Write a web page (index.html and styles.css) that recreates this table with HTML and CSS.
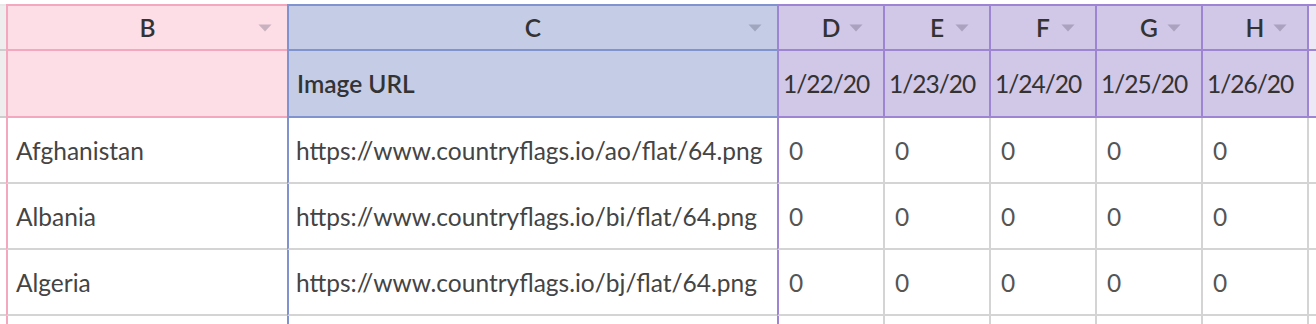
FILE: index.html
```html
<!DOCTYPE html>
<html>
<head>
<meta charset="utf-8">
<link rel="stylesheet" href="styles.css">
</head>
<body>
<div class="sheet">
  <div class="row head1">
    <div class="cell strip"></div>
    <div class="cell col-b"><span class="label">B</span><svg class="caret" viewBox="0 0 14 8"><path d="M0.5 0.5h13l-6.5 7z"/></svg></div>
    <div class="cell col-c"><span class="label">C</span><svg class="caret" viewBox="0 0 14 8"><path d="M0.5 0.5h13l-6.5 7z"/></svg></div>
    <div class="cell col-d narrow"><span class="label">D</span><svg class="caret" viewBox="0 0 14 8"><path d="M0.5 0.5h13l-6.5 7z"/></svg></div>
    <div class="cell col-d narrow"><span class="label">E</span><svg class="caret" viewBox="0 0 14 8"><path d="M0.5 0.5h13l-6.5 7z"/></svg></div>
    <div class="cell col-d narrow"><span class="label">F</span><svg class="caret" viewBox="0 0 14 8"><path d="M0.5 0.5h13l-6.5 7z"/></svg></div>
    <div class="cell col-d narrow"><span class="label">G</span><svg class="caret" viewBox="0 0 14 8"><path d="M0.5 0.5h13l-6.5 7z"/></svg></div>
    <div class="cell col-d narrow"><span class="label">H</span><svg class="caret" viewBox="0 0 14 8"><path d="M0.5 0.5h13l-6.5 7z"/></svg></div>
    <div class="cell col-i"></div>
  </div>
  <div class="row head2">
    <div class="cell strip"></div>
    <div class="cell col-b"></div>
    <div class="cell col-c title">Image URL</div>
    <div class="cell col-d date">1/22/20</div>
    <div class="cell col-d date">1/23/20</div>
    <div class="cell col-d date">1/24/20</div>
    <div class="cell col-d date">1/25/20</div>
    <div class="cell col-d date">1/26/20</div>
    <div class="cell col-i"></div>
  </div>
  <div class="row body">
    <div class="cell strip"></div>
    <div class="cell b-body">Afghanistan</div>
    <div class="cell c-body">https://www.countryflags.io/ao/flat/64.png</div>
    <div class="cell d-body num">0</div>
    <div class="cell g-body num">0</div>
    <div class="cell g-body num">0</div>
    <div class="cell g-body num">0</div>
    <div class="cell g-body num">0</div>
    <div class="cell g-body"></div>
  </div>
  <div class="row body">
    <div class="cell strip"></div>
    <div class="cell b-body">Albania</div>
    <div class="cell c-body">https://www.countryflags.io/bi/flat/64.png</div>
    <div class="cell d-body num">0</div>
    <div class="cell g-body num">0</div>
    <div class="cell g-body num">0</div>
    <div class="cell g-body num">0</div>
    <div class="cell g-body num">0</div>
    <div class="cell g-body"></div>
  </div>
  <div class="row body">
    <div class="cell strip"></div>
    <div class="cell b-body">Algeria</div>
    <div class="cell c-body">https://www.countryflags.io/bj/flat/64.png</div>
    <div class="cell d-body num">0</div>
    <div class="cell g-body num">0</div>
    <div class="cell g-body num">0</div>
    <div class="cell g-body num">0</div>
    <div class="cell g-body num">0</div>
    <div class="cell g-body"></div>
  </div>
  <div class="row tail">
    <div class="cell strip"></div>
    <div class="cell b-body"></div>
    <div class="cell c-body"></div>
    <div class="cell d-body"></div>
    <div class="cell g-body"></div>
    <div class="cell g-body"></div>
    <div class="cell g-body"></div>
    <div class="cell g-body"></div>
    <div class="cell g-body"></div>
  </div>
</div>
</body>
</html>
```
FILE: styles.css
```css
html, body {
  margin: 0;
  padding: 0;
  background: #ffffff;
}

.sheet {
  padding-top: 4px;
  font-family: "Lato", "Roboto", sans-serif;
  font-size: 24.5px;
  color: #3a3a3a;
}

.row {
  display: grid;
  grid-template-columns: 6px 281px 490px repeat(5, 106px) 1fr;
}

.cell {
  box-sizing: border-box;
  border-bottom: 2px solid #d4d4d4;
  border-left: 2px solid #d4d4d4;
  display: flex;
  align-items: center;
  white-space: nowrap;
  overflow: hidden;
  position: relative;
}

.head1 .cell {
  height: 47px;
  border-top-width: 2px;
  border-top-style: solid;
  justify-content: center;
  font-weight: 600;
  color: #333333;
}

.head2 .cell {
  height: 67px;
}

.body .cell {
  height: 66px;
}

.tail .cell {
  height: 8px;
  border-bottom: none;
}

.row .strip {
  border-left: none;
}

.head1 .strip,
.head2 .strip {
  background: #eeeeee;
  border-color: #e2e2e2;
  border-bottom-color: #cdcdcd;
}

.head1 .strip {
  border-top-color: #e8e8e8;
}

.row .col-b {
  background: #fddde6;
  border-color: #f4a8bf;
}

.row .col-c {
  background: #c5cce6;
  border-color: #8193cf;
}

.row .col-d {
  background: #d1c7e7;
  border-color: #9d85d3;
}

.row .col-i {
  background: #ece8f5;
  border-color: #9d85d3;
}

.caret {
  position: absolute;
  right: 15px;
  top: 18px;
  width: 14px;
  height: 8px;
  fill: rgba(70, 70, 90, 0.28);
}

.narrow .caret {
  right: 20px;
}

.title {
  font-weight: 600;
  padding-left: 8px;
  color: #333333;
}

.date {
  padding-left: 4px;
  letter-spacing: -1px;
  color: #333333;
}

.row .b-body {
  border-left-color: #f4a8bf;
  padding-left: 8px;
  color: #444444;
}

.row .c-body {
  border-left-color: #8193cf;
  padding-left: 7px;
  color: #444444;
}

.row .d-body {
  border-left-color: #9d85d3;
}

.num {
  padding-left: 10px;
  color: #555555;
}
```
